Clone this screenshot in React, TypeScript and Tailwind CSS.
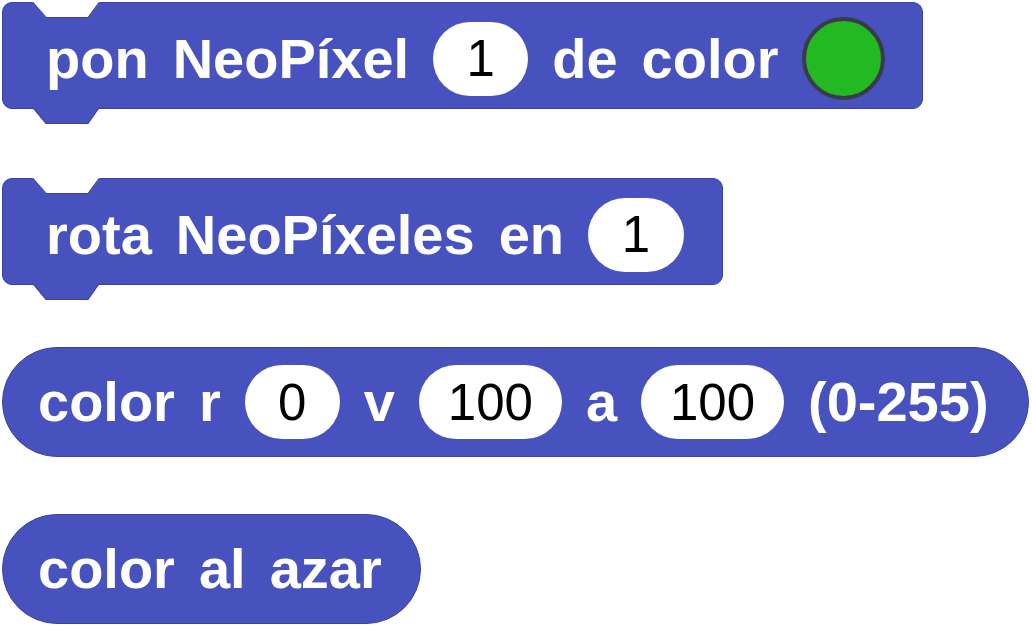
const BLUE = '#4752be';

const Word = ({ children }: { children: string }) => (
  <span className="text-[56px] font-bold leading-none text-white">{children}</span>
);

const Num = ({ value, w }: { value: string; w: string }) => (
  <span
    className={`${w} h-[74px] rounded-full bg-white flex items-center justify-center text-[51px] leading-none text-black`}
  >
    {value}
  </span>
);

const Notch = () => (
  <svg className="absolute left-[29px] top-[-1px]" width="68" height="17" viewBox="0 0 68 17">
    <path d="M0 0 L14 16 L56 16 L68 0 Z" fill="#ffffff" />
    <path d="M0.5 0 L14 15.5 L56 15.5 L67.5 0" fill="none" stroke="#3a43a0" strokeWidth="1.2" />
  </svg>
);

const Tab = () => (
  <svg className="absolute left-[29px] top-[calc(100%-1px)]" width="68" height="18" viewBox="0 0 68 18">
    <path d="M0 0 L14 16.5 L56 16.5 L68 0 Z" fill={BLUE} />
    <path d="M0.5 0 L14 16.5 L56 16.5 L67.5 0" fill="none" stroke="#3a43a0" strokeWidth="1.2" />
  </svg>
);

const StackBlock = ({ w, className, children }: { w: string; className?: string; children: React.ReactNode }) => (
  <div
    className={`relative ${w} h-[107px] rounded-[10px] border border-[#3a43a0] bg-[#4752be] pl-[43px] pt-[6px] flex items-center gap-[24px] ${className ?? ''}`}
  >
    <Notch />
    {children}
    <Tab />
  </div>
);

const Reporter = ({ w, className, children }: { w: string; className?: string; children: React.ReactNode }) => (
  <div
    className={`${w} h-[110px] rounded-full border border-[#3a43a0] bg-[#4752be] pl-[35px] flex items-center gap-[24px] ${className ?? ''}`}
  >
    {children}
  </div>
);

export default function App() {
  return (
    <div
      className="w-[1032px] h-[628px] bg-white pl-[2px] pt-[2px] flex flex-col items-start overflow-hidden"
      style={{ fontFamily: '"Liberation Sans", Arial, sans-serif' }}
    >
      <StackBlock w="w-[921px]">
        <Word>pon</Word>
        <Word>NeoPíxel</Word>
        <Num value="1" w="w-[95px]" />
        <Word>de</Word>
        <Word>color</Word>
        <span className="w-[83px] h-[83px] rounded-full border-[4px] border-[#3b3a48] bg-[#22b922]" />
      </StackBlock>

      <StackBlock w="w-[721px]" className="mt-[69px]">
        <Word>rota</Word>
        <Word>NeoPíxeles</Word>
        <Word>en</Word>
        <Num value="1" w="w-[96px]" />
      </StackBlock>

      <Reporter w="w-[1027px]" className="mt-[62px]">
        <Word>color</Word>
        <Word>r</Word>
        <Num value="0" w="w-[95px]" />
        <Word>v</Word>
        <Num value="100" w="w-[143px]" />
        <Word>a</Word>
        <Num value="100" w="w-[143px]" />
        <Word>(0-255)</Word>
      </Reporter>

      <Reporter w="w-[419px]" className="mt-[57px]">
        <Word>color</Word>
        <Word>al</Word>
        <Word>azar</Word>
      </Reporter>
    </div>
  );
}
